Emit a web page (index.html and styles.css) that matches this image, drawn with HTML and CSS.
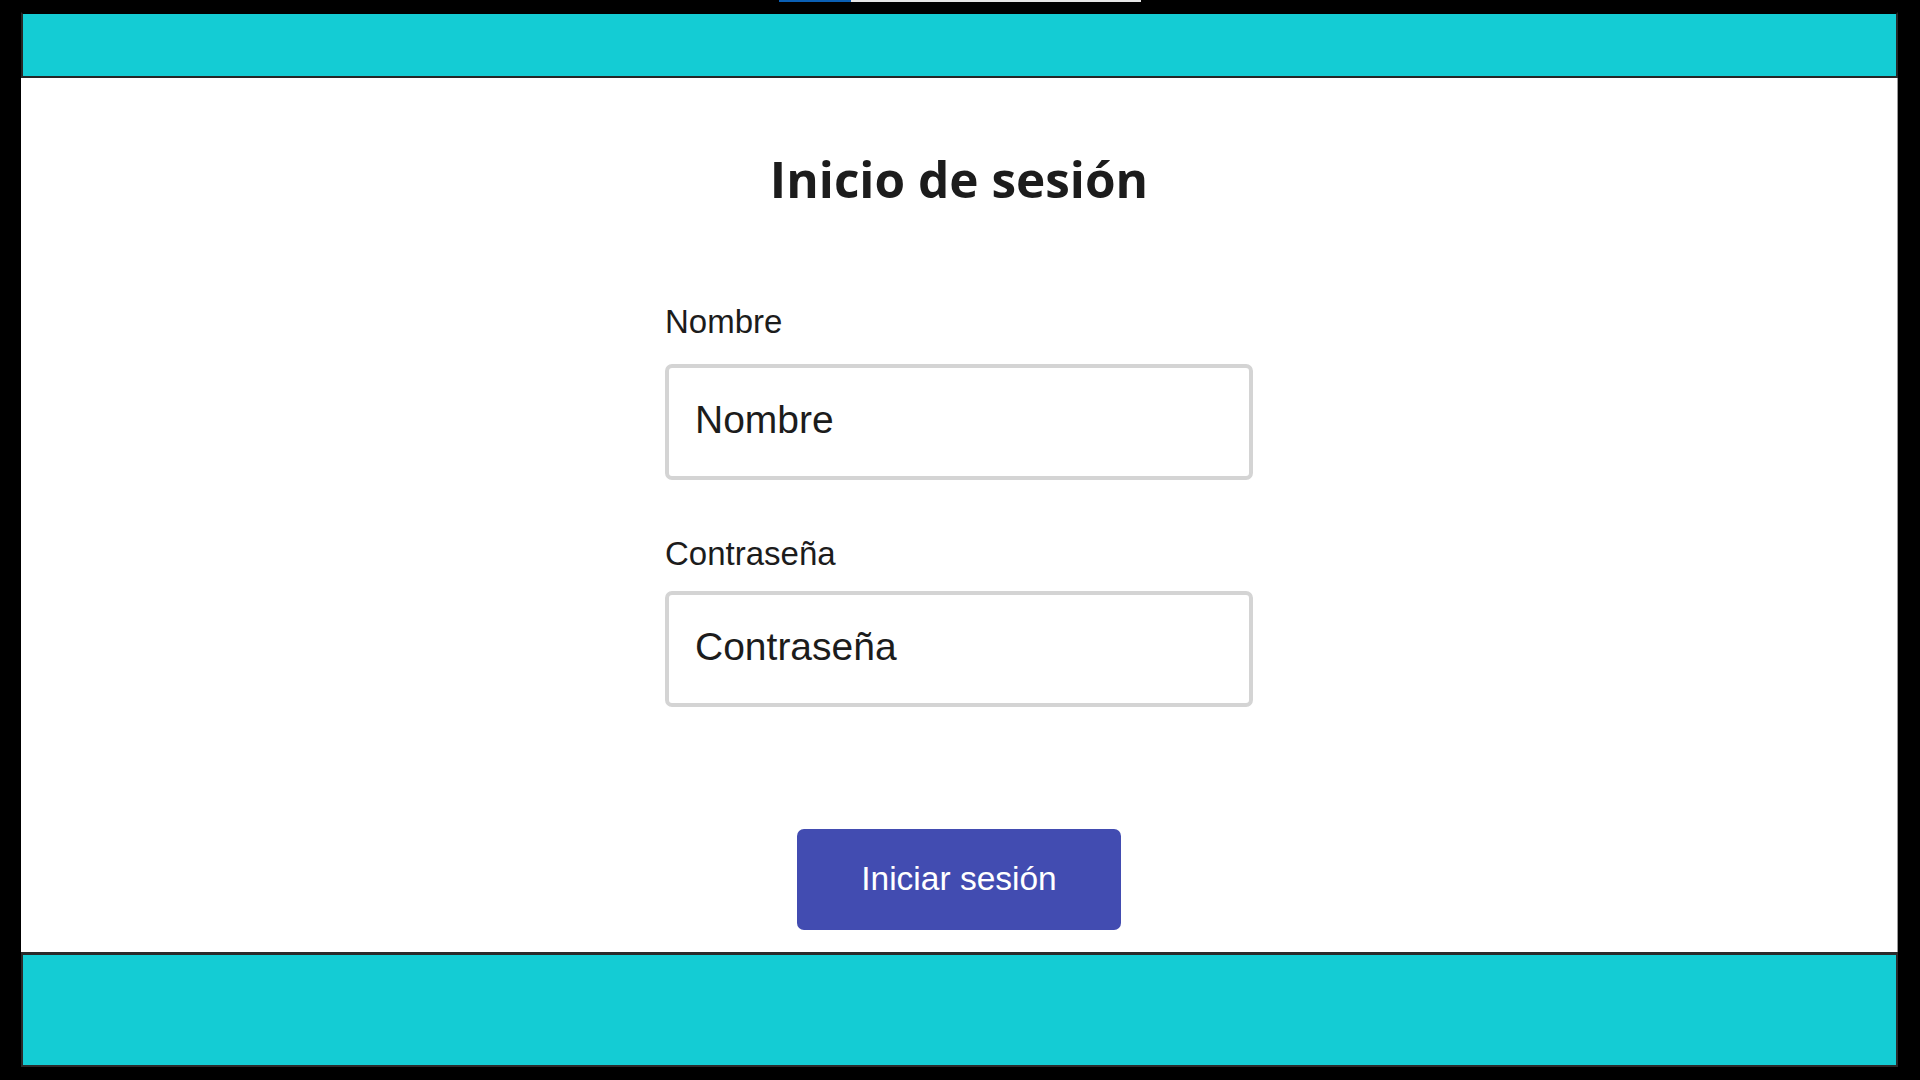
FILE: index.html
```html
<!DOCTYPE html>
<html lang="es">
<head>
<meta charset="utf-8">
<title>Inicio de sesión</title>
<link rel="stylesheet" href="styles.css">
</head>
<body>
<div class="topbar"><span class="topbar-active"></span><span class="topbar-rest"></span></div>
<div class="page">
  <header class="header"></header>
  <main class="main">
    <h1 class="title">Inicio de sesión</h1>
    <form class="form">
      <label class="label" for="nombre">Nombre</label>
      <input class="input" id="nombre" type="text" placeholder="Nombre">
      <label class="label label-second" for="pass">Contraseña</label>
      <input class="input input-second" id="pass" type="text" placeholder="Contraseña">
      <div class="actions">
        <button class="button" type="button">Iniciar sesión</button>
      </div>
    </form>
  </main>
  <footer class="footer"></footer>
</div>
</body>
</html>
```
FILE: styles.css
```css
* { box-sizing: border-box; }
html, body { margin: 0; height: 100%; }
body {
  background: #000;
  padding: 12px 22px 13px 21px;
  font-family: "Liberation Sans", Arial, sans-serif;
  color: #1c1c1c;
  overflow: hidden;
}
.topbar {
  position: absolute;
  top: 0;
  left: 779px;
  height: 2px;
  display: flex;
}
.topbar-active { width: 72px; background: #0a5fb4; }
.topbar-rest { width: 290px; background: #e6e6e6; }
.page {
  height: 1055px;
  display: flex;
  flex-direction: column;
}
.header {
  height: 66px;
  flex: none;
  background: #14ccd4;
  border: 2px solid #262626;
  border-top-color: #000;
}
.main {
  flex: 1;
  background: #fff;
  border-right: 1px solid #9a9a9a;
  padding-top: 69px;
  display: flex;
  flex-direction: column;
  align-items: center;
}
.title {
  margin: 0;
  font-family: "Open Sans", "Noto Sans", sans-serif;
  font-weight: 700;
  font-size: 49.5px;
  line-height: 64px;
  color: #1c1c1c;
}
.form {
  width: 588px;
  margin-top: 93px;
  display: flex;
  flex-direction: column;
}
.label {
  font-size: 33px;
  line-height: 36px;
  color: #1c1c1c;
}
.label-second { margin-top: 56px; }
.input {
  margin-top: 24px;
  height: 116px;
  border: 4px solid #d4d4d4;
  border-radius: 7px;
  padding: 0 24px 4px 26px;
  font-family: "Liberation Sans", Arial, sans-serif;
  font-size: 39px;
  color: #1c1c1c;
  background: #fff;
  outline: none;
}
.input-second { margin-top: 19px; }
.input::placeholder { color: #1c1c1c; opacity: 1; }
.actions {
  display: flex;
  justify-content: center;
  margin-top: 122px;
}
.button {
  width: 324px;
  height: 101px;
  border: none;
  border-radius: 7px;
  background: #424cb1;
  color: #fff;
  font-family: "Liberation Sans", Arial, sans-serif;
  font-size: 33.5px;
  padding: 0 0 2px;
  cursor: pointer;
}
.footer {
  height: 115px;
  flex: none;
  background: #14ccd4;
  border: 2px solid #2a2a2a;
  border-top-width: 3px;
}
```
